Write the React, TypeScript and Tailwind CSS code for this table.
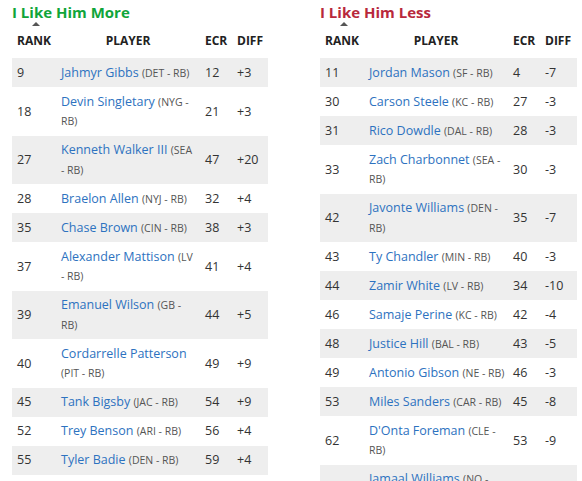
import React from 'react';

type Row = { rank: number; name: string; team: string; ecr: number | string; diff: string };

const MORE: Row[] = [
  { rank: 9, name: 'Jahmyr Gibbs', team: '(DET - RB)', ecr: 12, diff: '+3' },
  { rank: 18, name: 'Devin Singletary', team: '(NYG - RB)', ecr: 21, diff: '+3' },
  { rank: 27, name: 'Kenneth Walker III', team: '(SEA - RB)', ecr: 47, diff: '+20' },
  { rank: 28, name: 'Braelon Allen', team: '(NYJ - RB)', ecr: 32, diff: '+4' },
  { rank: 35, name: 'Chase Brown', team: '(CIN - RB)', ecr: 38, diff: '+3' },
  { rank: 37, name: 'Alexander Mattison', team: '(LV - RB)', ecr: 41, diff: '+4' },
  { rank: 39, name: 'Emanuel Wilson', team: '(GB - RB)', ecr: 44, diff: '+5' },
  { rank: 40, name: 'Cordarrelle Patterson', team: '(PIT - RB)', ecr: 49, diff: '+9' },
  { rank: 45, name: 'Tank Bigsby', team: '(JAC - RB)', ecr: 54, diff: '+9' },
  { rank: 52, name: 'Trey Benson', team: '(ARI - RB)', ecr: 56, diff: '+4' },
  { rank: 55, name: 'Tyler Badie', team: '(DEN - RB)', ecr: 59, diff: '+4' },
];

const LESS: Row[] = [
  { rank: 11, name: 'Jordan Mason', team: '(SF - RB)', ecr: 4, diff: '-7' },
  { rank: 30, name: 'Carson Steele', team: '(KC - RB)', ecr: 27, diff: '-3' },
  { rank: 31, name: 'Rico Dowdle', team: '(DAL - RB)', ecr: 28, diff: '-3' },
  { rank: 33, name: 'Zach Charbonnet', team: '(SEA - RB)', ecr: 30, diff: '-3' },
  { rank: 42, name: 'Javonte Williams', team: '(DEN - RB)', ecr: 35, diff: '-7' },
  { rank: 43, name: 'Ty Chandler', team: '(MIN - RB)', ecr: 40, diff: '-3' },
  { rank: 44, name: 'Zamir White', team: '(LV - RB)', ecr: 34, diff: '-10' },
  { rank: 46, name: 'Samaje Perine', team: '(KC - RB)', ecr: 42, diff: '-4' },
  { rank: 48, name: 'Justice Hill', team: '(BAL - RB)', ecr: 43, diff: '-5' },
  { rank: 49, name: 'Antonio Gibson', team: '(NE - RB)', ecr: 46, diff: '-3' },
  { rank: 53, name: 'Miles Sanders', team: '(CAR - RB)', ecr: 45, diff: '-8' },
  { rank: 62, name: "D'Onta Foreman", team: '(CLE - RB)', ecr: 53, diff: '-9' },
  { rank: 65, name: 'Jamaal Williams', team: '(NO - RB)', ecr: 58, diff: '-7' },
];

const RankTable: React.FC<{ title: string; titleClass: string; rows: Row[]; widthClass: string }> = ({ title, titleClass, rows, widthClass }) => {
  const cols = widthClass;
  return (
    <div className="flex flex-col">
      <h2 className={`text-[15px] font-bold leading-[24px] ${titleClass}`}>{title}</h2>
      <div className={`grid ${cols} h-[34px] items-end pb-[9px] text-[12px] font-bold leading-[16px] text-[#222]`}>
        <div className="relative pl-[5px]">
          <span className="absolute left-[20px] top-[-11px] h-0 w-0 border-x-[4px] border-b-[4px] border-x-transparent border-b-[#555]" />
          RANK
        </div>
        <div className="text-center">PLAYER</div>
        <div className="pl-[5px]">ECR</div>
        <div className="pl-[5px]">DIFF</div>
      </div>
      {rows.map((r, i) => (
        <div
          key={r.rank}
          className={`grid ${cols} items-center py-[4.75px] text-[12.5px] leading-[19.5px] text-[#333] ${i % 2 === 0 ? 'bg-[#eeeeee]' : 'bg-white'}`}
        >
          <div className="pl-[5px]">{r.rank}</div>
          <div className="pl-[5px] pr-[3px]">
            <span className="text-[#2d72c0]">{r.name}</span>{' '}
            <span className="text-[10.5px] leading-none text-[#555]">{r.team}</span>
          </div>
          <div className="pl-[5px]">{r.ecr}</div>
          <div className="pl-[5px]">{r.diff}</div>
        </div>
      ))}
    </div>
  );
};

const App: React.FC = () => {
  return (
    <div className="h-[481px] overflow-hidden bg-white font-['Open_Sans',sans-serif]">
      <div className="flex gap-[52px] pl-[12px]">
        <RankTable title="I Like Him More" titleClass="text-[#10a53a]" rows={MORE} widthClass="grid-cols-[44px_144px_32px_36px]" />
        <RankTable title="I Like Him Less" titleClass="text-[#b8283c]" rows={LESS} widthClass="grid-cols-[44px_144px_32px_37px]" />
      </div>
    </div>
  );
};

export default App;
